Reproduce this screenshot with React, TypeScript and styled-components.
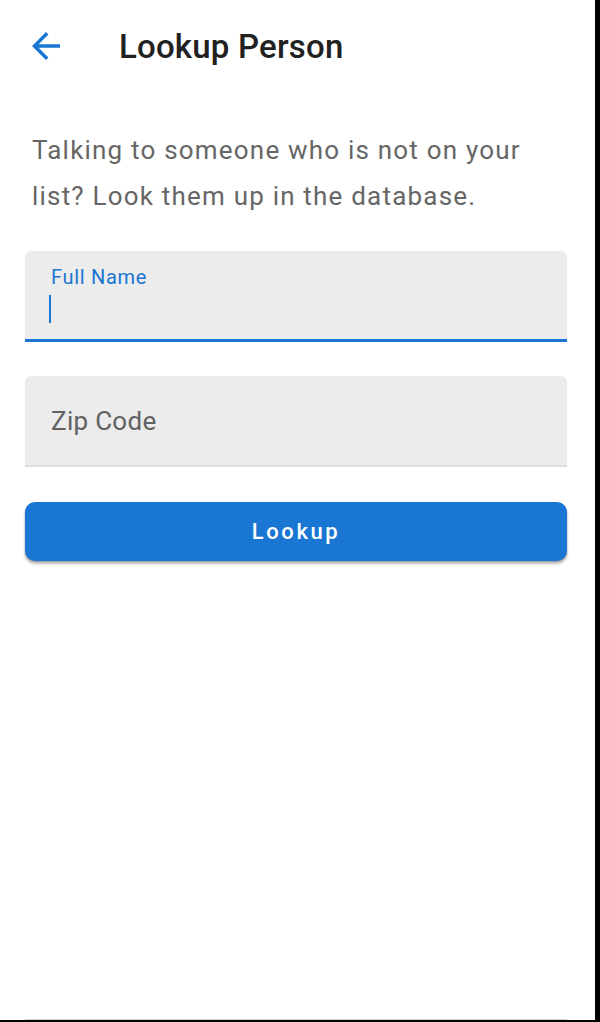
import styled, { createGlobalStyle } from "styled-components";

const GlobalStyle = createGlobalStyle`
  html, body {
    margin: 0;
    padding: 0;
    background: #000;
  }
  body {
    font-family: Roboto, "Noto Sans", sans-serif;
  }
`;

const Screen = styled.div`
  width: 595px;
  height: 1020px;
  background: #fff;
  box-sizing: border-box;
  padding: 0 28px 0 25px;
  display: flex;
  flex-direction: column;
`;

const Header = styled.header`
  display: flex;
  align-items: center;
  height: 92px;
  gap: 52px;
`;

const BackButton = styled.button`
  border: none;
  background: none;
  padding: 0;
  width: 42px;
  height: 42px;
  display: flex;
  align-items: center;
  justify-content: center;
  color: #1976d2;
  cursor: pointer;
`;

const Title = styled.h1`
  margin: 0;
  font-size: 33px;
  font-weight: 500;
  color: #212121;
  letter-spacing: 0.2px;
`;

const Intro = styled.p`
  margin: 35px 0 0;
  padding-left: 7px;
  font-size: 26px;
  line-height: 46px;
  letter-spacing: 1.2px;
  color: #666;
`;

const Form = styled.form`
  display: flex;
  flex-direction: column;
  gap: 34px;
  margin-top: 32px;
`;

const Field = styled.label<{ $focused?: boolean }>`
  position: relative;
  display: block;
  height: 91px;
  box-sizing: border-box;
  background: #ececec;
  border-radius: 6px 6px 0 0;
  border-bottom: ${(p) => (p.$focused ? "3px solid #1976d2" : "2px solid #dedede")};
  padding: 0 26px;
`;

const FloatLabel = styled.span`
  display: block;
  padding-top: 13px;
  font-size: 20px;
  line-height: 26px;
  letter-spacing: 0.7px;
  color: #1976d2;
`;

const Caret = styled.span`
  display: block;
  margin-top: 5px;
  margin-left: -2px;
  width: 2px;
  height: 28px;
  background: #1976d2;
`;

const Placeholder = styled.span`
  display: block;
  line-height: 91px;
  font-size: 26px;
  letter-spacing: 0.3px;
  color: #616161;
`;

const SubmitButton = styled.button`
  margin-top: 1px;
  height: 59px;
  border: none;
  border-radius: 10px;
  background: #1976d2;
  color: #fff;
  font-family: Roboto, "Noto Sans", sans-serif;
  font-size: 22px;
  font-weight: 500;
  letter-spacing: 2.6px;
  box-shadow: 0 3px 3px rgba(0, 0, 0, 0.25), 0 1px 2px rgba(0, 0, 0, 0.2);
  cursor: pointer;
`;

const BottomEdge = styled.div`
  margin-top: auto;
  height: 1px;
  background: #d8d8d8;
`;

const ArrowBack = () => (
  <svg width="42" height="42" viewBox="0 0 24 24" fill="currentColor">
    <path d="M20 11H7.83l5.59-5.59L12 4l-8 8 8 8 1.41-1.41L7.83 13H20v-2z" />
  </svg>
);

export default function App() {
  return (
    <>
      <GlobalStyle />
      <Screen>
        <Header>
          <BackButton aria-label="Back">
            <ArrowBack />
          </BackButton>
          <Title>Lookup Person</Title>
        </Header>
        <Intro>
          Talking to someone who is not on your list? Look them up in the database.
        </Intro>
        <Form onSubmit={(e) => e.preventDefault()}>
          <Field $focused>
            <FloatLabel>Full Name</FloatLabel>
            <Caret />
          </Field>
          <Field>
            <Placeholder>Zip Code</Placeholder>
          </Field>
          <SubmitButton type="submit">Lookup</SubmitButton>
        </Form>
        <BottomEdge />
      </Screen>
    </>
  );
}
